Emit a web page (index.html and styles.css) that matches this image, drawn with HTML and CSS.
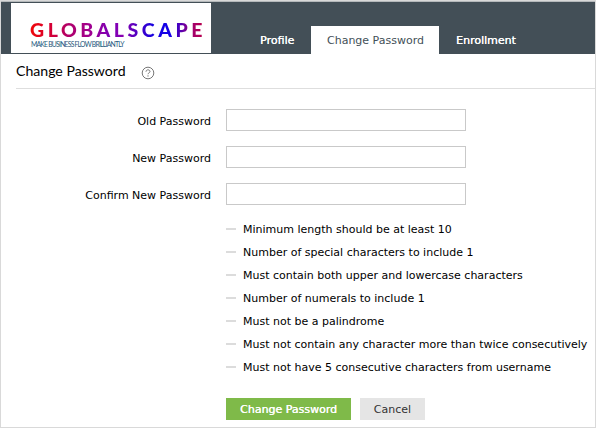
FILE: index.html
```html
<!DOCTYPE html>
<html lang="en">
<head>
<meta charset="utf-8">
<title>Change Password</title>
<link rel="stylesheet" href="styles.css">
</head>
<body>
<div class="page">

<div class="header">
  <div class="logo">
    <div class="logo-name">GLOBALSCAPE</div>
    <div class="logo-tag">MAKE BUSINESS FLOW BRILLIANTLY</div>
  </div>
  <div class="tabs">
    <a class="tab profile">Profile</a>
    <a class="tab active">Change Password</a>
    <a class="tab enrollment">Enrollment</a>
  </div>
</div>

<div class="title">
  <h1>Change Password</h1>
  <svg class="help" width="14" height="14" viewBox="0 0 14 14" fill="none" stroke="#777">
    <circle cx="7" cy="7" r="5.8"/>
    <path d="M5 5.700c0-2.500 4-2.400 4-.2 0 1.300-2 1.400-2 2.700M7 9.300v1.300"/>
  </svg>
</div>

<form class="form">
  <div class="row"><label for="old">Old Password</label><input id="old" type="password"></div>
  <div class="row"><label for="new">New Password</label><input id="new" type="password"></div>
  <div class="row"><label for="confirm">Confirm New Password</label><input id="confirm" type="password"></div>

  <ul class="rules">
    <li>Minimum length should be at least 10</li>
    <li>Number of special characters to include 1</li>
    <li>Must contain both upper and lowercase characters</li>
    <li>Number of numerals to include 1</li>
    <li>Must not be a palindrome</li>
    <li>Must not contain any character more than twice consecutively</li>
    <li>Must not have 5 consecutive characters from username</li>
  </ul>

  <div class="buttons">
    <button class="btn save" type="button">Change Password</button>
    <button class="btn cancel" type="button">Cancel</button>
  </div>
</form>

</div>
</body>
</html>
```
FILE: styles.css
```css
* {
  box-sizing: border-box;
}

body {
  margin: 0;
  font-family: "DejaVu Sans", Verdana, sans-serif;
  font-size: 11px;
  color: #000;
  background: #fff;
}

.page {
  width: 596px;
  height: 428px;
  border: 1px solid #d9d9d9;
  overflow: hidden;
}

.header {
  display: flex;
  height: 53px;
  padding-left: 10px;
  border-top: 1px solid #b5b9bb;
  background: #434f57;
}

.logo {
  width: 200px;
  height: 50px;
  margin-top: 1px;
  padding: 17px 0 0 19px;
  background: #fff;
  font-family: Lato, sans-serif;
  white-space: nowrap;
}

.logo-name {
  width: 176px;
  height: 20px;
  font-size: 19.5px;
  line-height: 20px;
  font-weight: 900;
  letter-spacing: 3.55px;
  color: transparent;
  background: linear-gradient(90deg, #f00808 0%, #d80030 11%, #b0006a 22%, #a3008c 33%, #7b00b8 46%, #8a00b0 53%, #5500c0 60%, #1500e0 70%, #1500e8 80%, #5a00b0 86%, #a00070 92%, #c00040 100%);
  -webkit-background-clip: text;
  background-clip: text;
}

.logo-tag {
  height: 8px;
  margin-left: 1px;
  font-size: 6.8px;
  line-height: 8px;
  letter-spacing: -0.77px;
  color: #24587c;
}

.tabs {
  display: flex;
  align-items: flex-end;
  margin-left: 34px;
}

.tab {
  height: 28px;
  line-height: 30px;
  padding: 0 15px;
  color: #fff;
  white-space: nowrap;
}

.profile {
  width: 66px;
}

.active {
  width: 128px;
  padding-left: 16px;
  background: #fff;
  color: #434f57;
}

.enrollment {
  padding-left: 17px;
}

.profile,
.enrollment {
  text-shadow: 0.3px 0 #fff;
}

.title {
  display: flex;
  align-items: center;
  height: 35px;
  margin-left: 15px;
  border-bottom: 1px solid #dedede;
}

.title h1 {
  width: 125px;
  margin: 0;
  padding-bottom: 2px;
  font-family: Lato, sans-serif;
  font-size: 14.1px;
  font-weight: normal;
}

.help {
  margin-top: 3px;
}

.form {
  padding-top: 20px;
}

.row {
  display: flex;
  height: 22px;
  margin-bottom: 15px;
}

.row label {
  width: 210px;
  line-height: 26px;
  text-align: right;
}

.row input {
  width: 240px;
  height: 22px;
  margin-left: 15px;
  border: 1px solid #c9c9c9;
  background: #fff;
}

.rules {
  margin: -2px 0 0 225px;
  padding: 0;
  list-style: none;
}

.rules li {
  display: flex;
  align-items: center;
  height: 23px;
  line-height: 23px;
  white-space: nowrap;
}

.rules li::before {
  content: "";
  width: 10px;
  height: 2px;
  margin: -1px 7px 0 0;
  background: #dcdcdc;
}

.buttons {
  display: flex;
  gap: 9px;
  margin: 19px 0 0 225px;
}

.btn {
  height: 22px;
  padding: 0;
  border: 0;
  font: 11px "DejaVu Sans", Verdana, sans-serif;
}

.save {
  width: 125px;
  background: #7fba49;
  color: #fff;
  text-shadow: 0.3px 0 #fff;
}

.cancel {
  width: 65px;
  background: #e5e5e5;
  color: #333;
}
```
